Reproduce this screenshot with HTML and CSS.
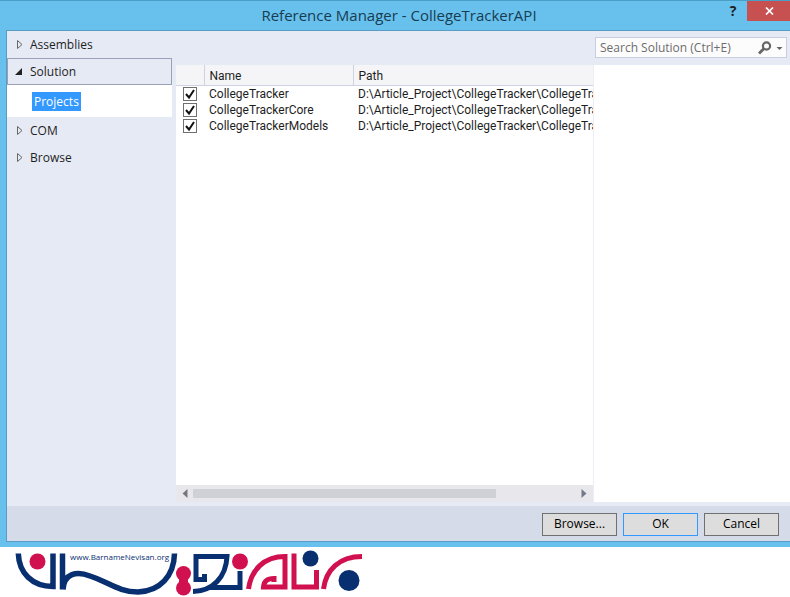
FILE: index.html
```html
<!DOCTYPE html>
<html lang="en">
<head>
<meta charset="utf-8">
<title>Reference Manager - CollegeTrackerAPI</title>
<link rel="stylesheet" href="styles.css">
</head>
<body>
<main class="window">
  <header class="titlebar">
    <h1>Reference Manager - CollegeTrackerAPI</h1>
    <div class="caption">
      <button class="help" aria-label="Help">?</button>
      <button class="close" aria-label="Close"><svg width="9" height="8" viewBox="0 0 9 8"><path d="M1 .5l7 7M8 .5l-7 7" stroke="#fff" stroke-width="1.7"/></svg></button>
    </div>
  </header>
  <div class="client">
    <div class="content">
      <nav class="sidebar">
        <a class="group" href="#"><svg width="8" height="9" viewBox="0 0 8 9"><path d="M2.500 .5v8L7 4.500z" fill="none" stroke="#666"/></svg>Assemblies</a>
        <a class="group open" href="#"><svg width="8" height="9" viewBox="0 0 8 9"><path d="M7 1v7H0z" fill="#222"/></svg>Solution</a>
        <div class="children"><a class="selected" href="#">Projects</a></div>
        <a class="group" href="#"><svg width="8" height="9" viewBox="0 0 8 9"><path d="M2.500 .5v8L7 4.500z" fill="none" stroke="#666"/></svg>COM</a>
        <a class="group" href="#"><svg width="8" height="9" viewBox="0 0 8 9"><path d="M2.500 .5v8L7 4.500z" fill="none" stroke="#666"/></svg>Browse</a>
      </nav>
      <section class="list">
        <div class="viewport">
          <table>
            <thead><tr><th class="check"></th><th class="name">Name</th><th>Path</th></tr></thead>
            <tbody>
              <tr><td><input type="checkbox" aria-label="CollegeTracker" checked></td><td>CollegeTracker</td><td>D:\Article_Project\CollegeTracker\CollegeTracker</td></tr>
              <tr><td><input type="checkbox" aria-label="CollegeTrackerCore" checked></td><td>CollegeTrackerCore</td><td>D:\Article_Project\CollegeTracker\CollegeTracker</td></tr>
              <tr><td><input type="checkbox" aria-label="CollegeTrackerModels" checked></td><td>CollegeTrackerModels</td><td>D:\Article_Project\CollegeTracker\CollegeTracker</td></tr>
            </tbody>
          </table>
        </div>
        <div class="scrollbar">
          <svg width="6" height="9" viewBox="0 0 6 9"><path d="M5.500 0v9L.5 4.500z" fill="#77777d"/></svg>
          <div class="track"><div class="thumb"></div></div>
          <svg width="6" height="9" viewBox="0 0 6 9"><path d="M.5 0v9l5-4.500z" fill="#77778c"/></svg>
        </div>
      </section>
      <aside class="details">
        <div class="search">
          <input type="text" aria-label="Search Solution" placeholder="Search Solution (Ctrl+E)">
          <svg width="26" height="14" viewBox="0 0 26 14"><circle cx="8.500" cy="5" r="3.600" fill="none" stroke="#666" stroke-width="2.200"/><path d="M6 7.500L1 12.500" stroke="#666" stroke-width="2.800"/><path d="M18.500 6h6l-3 3z" fill="#666"/></svg>
        </div>
        <div class="pane"></div>
      </aside>
    </div>
    <footer class="actions">
      <button>Browse...</button><button class="default">OK</button><button>Cancel</button>
    </footer>
  </div>
</main>
<svg class="logo" width="380" height="50" viewBox="0 547 380 50" role="img" aria-label="BarnameNevisan">
  <g fill="none" stroke="#082f70" stroke-width="5.500">
    <path d="M18.300 553.500C19 573 32 586.500 53 586.500V553.500"/>
    <path d="M62.500 589.500V553.500M63 589.500C64 573 77 571 90 576C108 582 119 592 138 592C160 591 174 576 174.500 553.500"/>
    <path d="M204.500 574V579.500H196V556.500H227C226 577 213 591 193 591.500" stroke-width="5"/>
    <path d="M209 587.500H240V571" stroke-width="5"/>
  </g>
  <g fill="none" stroke="#d0104f" stroke-width="5">
    <path d="M248.500 589C251 570 264 556.500 285 556.500V587H263.500C264 581 267 578.500 274 578.500V582"/>
    <path d="M294 553.500V587H316.500V570M323.500 589C326 570 339 556.500 362 556.500"/>
  </g>
  <g fill="#d0104f"><circle cx="37.500" cy="561.500" r="8"/><circle cx="183.500" cy="573.500" r="7.500"/><circle cx="183.500" cy="588" r="7.500"/><path d="M179 577h9v8h-9z"/><circle cx="240" cy="561.500" r="8"/></g>
  <g fill="#082f70"><circle cx="310.500" cy="558.500" r="8"/><circle cx="349" cy="580.500" r="10.500"/></g>
  <text x="70" y="560">www.BarnameNevisan.org</text>
</svg>
</body>
</html>
```
FILE: styles.css
```css
* { box-sizing: border-box; }
body { margin: 0; height: 100vh; display: flex; flex-direction: column; background: #fff; color: #1e1e1e; font: 12px/16px "Open Sans", "Noto Sans", sans-serif; }
button, input { font: inherit; color: inherit; }
a { color: inherit; text-decoration: none; }
.window { flex: 1; min-height: 0; display: flex; flex-direction: column; padding: 0 0 5px 6px; background: #68c0ed; border-top: 1px solid #4a9fc8; }
.titlebar { height: 29px; flex: none; display: grid; grid-template-columns: 1fr auto 1fr; padding-left: 2px; }
h1 { grid-column: 2; margin: 0; font-size: 15px; font-weight: 400; line-height: 29px; color: #173d52; }
.caption { display: flex; justify-content: flex-end; align-items: flex-start; }
.caption button { border: 0; padding: 0; height: 20px; background: none; }
.caption .help { width: 28px; font-size: 14px; font-weight: 700; }
.caption .close { width: 43px; padding-left: 2px; background: #c75050; }
.client { flex: 1; min-height: 0; display: flex; flex-direction: column; background: #e6eaf5; border: 1px solid #589bc5; border-right: 0; }
.content { flex: 1; min-height: 0; display: grid; grid-template-columns: 165px minmax(0, 1fr) 197px; padding-bottom: 4px; }
.group { display: flex; align-items: center; height: 27px; gap: 7px; padding-left: 8px; }
.group.open { border: 1px solid #9aa0b8; padding-left: 7px; }
.children { background: #fff; height: 32px; padding: 7px 0 0 25px; }
.selected { display: inline-block; height: 19px; line-height: 19px; padding: 0 2px; background: #3399ff; color: #fff; }
.list { display: flex; flex-direction: column; margin: 34px 0 0 4px; background: #fff; min-width: 0; }
.viewport { flex: 1; min-height: 0; overflow: hidden; }
table { border-collapse: collapse; table-layout: fixed; width: 100%; font-family: Roboto, "Open Sans", sans-serif; }
th, td { padding: 0 0 0 5px; text-align: left; font-weight: 400; white-space: nowrap; overflow: hidden; }
th { height: 20px; padding-top: 2px; background: #f5f5f7; border-bottom: 1px solid #cfd2e0; border-right: 1px solid #cfd2e0; }
th:last-child { border-right: 0; }
.check { width: 28px; }
.name { width: 149px; }
td { height: 16px; }
td input { appearance: none; display: block; width: 14px; height: 14px; margin: 0 0 0 2px; border: 1px solid #707070; background: #fff; }
td input:checked { background: url("data:image/svg+xml,%3Csvg xmlns='http://www.w3.org/2000/svg' viewBox='0 0 12 12'%3E%3Cpath d='M2 6l3 3.500 5-7.500' fill='none' stroke='%23111' stroke-width='2'/%3E%3C/svg%3E") #fff; }
.scrollbar { height: 17px; display: flex; align-items: center; padding: 0 6px; gap: 5px; background: #e8e8ec; }
.track { flex: 1; }
.thumb { height: 9px; width: 79%; background: #d0d1d7; }
.details { display: flex; flex-direction: column; }
.search { display: flex; align-items: center; height: 21px; margin: 6px 3px 7px 2px; padding-right: 2px; border: 1px solid #c8cde0; background: #fcfcfc; }
.search input { flex: 1; min-width: 0; border: 0; padding: 0 4px; background: none; outline: 0; }
.search input::placeholder { color: #6d6d6d; opacity: 1; }
.pane { flex: 1; background: #fff; border-left: 1px solid #eceef6; }
.actions { height: 35px; flex: none; display: flex; justify-content: flex-end; align-items: center; gap: 6px; padding: 1px 11px 0 0; background: #d6dbe9; }
.actions button { width: 75px; height: 23px; padding: 0; border: 1px solid #707070; background: #ddd; color: #000; }
.actions button.default { border-color: #3399ff; }
.logo { flex: none; display: block; }
.logo text { font: 8px "Open Sans", sans-serif; fill: #082f70; }
```
